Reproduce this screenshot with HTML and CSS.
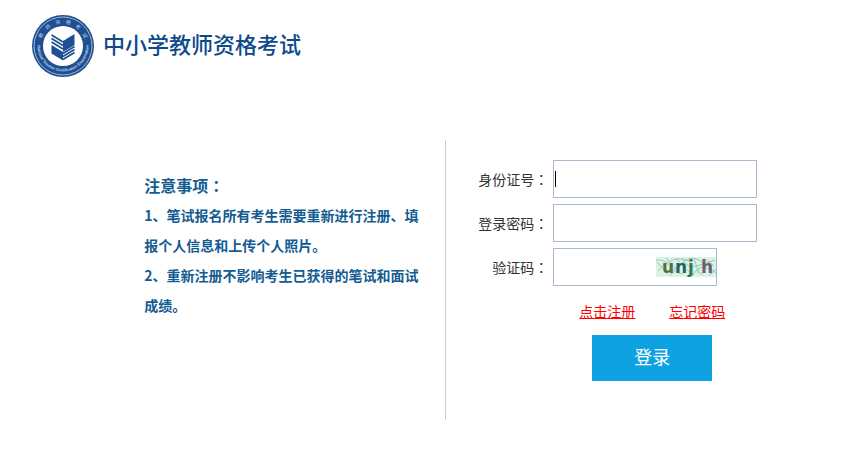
FILE: index.html
```html
<!DOCTYPE html>
<html lang="zh-CN">
<head>
    <meta charset="UTF-8">
    <meta name="viewport" content="width=device-width, initial-scale=1.0">
    <title>中小学教师资格考试</title>
    <link rel="stylesheet" href="styles.css">
</head>
<body>
    <header class="header">
        <svg class="logo" viewBox="0 0 62 62" aria-hidden="true">
            <defs>
                <path id="arc-top" d="M8.500 31 A22.500 22.500 0 0 1 53.500 31"/>
                <path id="arc-bottom" d="M6 26 A25.500 25.500 0 1 0 56 26"/>
            </defs>
            <circle cx="31" cy="31" r="31" fill="#1d4f91"/>
            <circle cx="31" cy="31" r="29" fill="none" stroke="#c3d2e6" stroke-width="0.800"/>
            <circle cx="31" cy="31" r="20" fill="#fff"/>
            <text class="logo-cn" text-anchor="middle"><textPath href="#arc-top" startOffset="50%">教　师　资　格　考　试</textPath></text>
            <text class="logo-en" text-anchor="middle"><textPath href="#arc-bottom" startOffset="50%">National Teacher Certification Examination</textPath></text>
            <g fill="#1d4f91">
                <path d="M31 26 L42.500 19 V30 L31 37 Z"/>
                <path d="M19.500 30 L31 37 V45.500 L19.500 38.500 Z"/>
            </g>
            <g fill="none" stroke="#1d4f91" stroke-width="1.700">
                <path d="M19.500 20 L31 27 M19.500 23.500 L31 30.500 M19.500 27 L31 34"/>
                <path d="M31 38.500 L42.500 31.500 M31 41.500 L42.500 34.500 M31 44.500 L42.500 37.500"/>
            </g>
        </svg>
        <h1 class="site-name">中小学教师资格考试</h1>
    </header>
    <main class="main">
        <section class="notice">
            <div class="notice-text">
                <h2>注意事项<span class="colon" lang="zh-TW">：</span></h2>
                <p>1、笔试报名所有考生需要重新进行注册、填报个人信息和上传个人照片。</p>
                <p>2、重新注册不影响考生已获得的笔试和面试成绩。</p>
            </div>
        </section>
        <form class="login">
            <div class="row">
                <label for="idcard">身份证号<span class="colon" lang="zh-TW">：</span></label>
                <div class="field">
                    <input type="text" id="idcard">
                    <span class="caret"></span>
                </div>
            </div>
            <div class="row">
                <label for="password">登录密码<span class="colon" lang="zh-TW">：</span></label>
                <div class="field">
                    <input type="password" id="password">
                </div>
            </div>
            <div class="row">
                <label for="code">验证码<span class="colon" lang="zh-TW">：</span></label>
                <div class="field field-code">
                    <input type="text" id="code">
                    <svg class="captcha" viewBox="0 0 60 20">
                        <rect width="60" height="20" fill="#d9f3e8"/>
                        <path class="noise" d="M0 3 Q9 2 14 9 T27 17 M2 14 Q8 6 17 3 T34 5 M14 19 Q22 8 30 3 T47 6 M26 1 Q31 12 41 9 T59 3 M36 19 Q42 8 51 11 T60 17 M5 10 L12 17 M1 5 L8 13 M20 1 L27 9 M40 13 L47 18 M50 2 L58 9 M31 13 L38 18 M38 2 L43 16 M53 19 L60 12 M10 1 L20 12"/>
                        <text x="6" y="16" fill="#5b6d44">u</text>
                        <text x="19" y="16" fill="#1f655f">n</text>
                        <text x="32" y="16" fill="#38744f">j</text>
                        <text x="45" y="16" fill="#6b6070">h</text>
                    </svg>
                </div>
            </div>
            <div class="links">
                <a href="#">点击注册</a>
                <a href="#">忘记密码</a>
            </div>
            <button type="button" class="submit">登录</button>
        </form>
    </main>
</body>
</html>
```

FILE: styles.css
```css
body {
    margin: 0;
    background: #fff;
    color: #333;
    font-family: "Noto Sans CJK SC", sans-serif;
    font-size: 14px;
}
.header {
    display: flex;
    align-items: flex-start;
    gap: 9px;
    padding: 15px 32px;
}
.logo {
    width: 62px;
    height: 62px;
}
.logo-cn {
    font-size: 5px;
    fill: #c3d2e6;
}
.logo-en {
    font-family: "Liberation Sans", sans-serif;
    font-size: 4px;
    font-weight: bold;
    fill: #c3d2e6;
}
.site-name {
    margin: 0;
    font-size: 22px;
    line-height: 56px;
    font-weight: 500;
    color: #0d4a8c;
}
.colon {
    font-family: "Noto Sans CJK TC", sans-serif;
}
.main {
    display: flex;
    margin-top: 48px;
}
.notice {
    box-sizing: border-box;
    width: 53%;
    min-height: 280px;
    padding: 30px 25px 0 16px;
    border-right: 1px solid #ccc;
    display: flex;
    justify-content: flex-end;
}
.notice-text {
    max-width: 276px;
    color: #135c92;
    font-weight: bold;
}
.notice-text h2 {
    margin: 0;
    font-size: 16px;
    line-height: 30px;
}
.notice-text p {
    margin: 0;
    line-height: 30px;
}
.login {
    padding: 20px 0 0 32px;
}
.row {
    display: flex;
    align-items: center;
    gap: 5px;
    margin-bottom: 6px;
}
.row label {
    width: 70px;
    text-align: right;
}
.field {
    position: relative;
    width: 204px;
}
.field-code {
    width: 164px;
}
.field input {
    display: block;
    box-sizing: border-box;
    width: 100%;
    height: 38px;
    padding: 0 2px;
    border: 1px solid #a5bad0;
    outline: none;
    font-size: 14px;
}
.caret {
    position: absolute;
    left: 2px;
    top: 11px;
    width: 1px;
    height: 16px;
    background: #000;
}
.captcha {
    position: absolute;
    right: 1px;
    top: 9px;
    width: 60px;
    height: 20px;
}
.captcha text {
    font-family: "DejaVu Sans", sans-serif;
    font-size: 17px;
    font-weight: bold;
}
.noise {
    fill: none;
    stroke: #a3c4b8;
}
.links {
    display: flex;
    gap: 34px;
    padding: 9px 0 14px 101px;
    line-height: 20px;
}
.links a {
    color: #f00;
}
.submit {
    display: block;
    width: 120px;
    height: 46px;
    margin-left: 114px;
    padding: 0 0 4px;
    border: 0;
    background: #0fa2e3;
    color: #fff;
    font-family: inherit;
    font-size: 18px;
    cursor: pointer;
}
```
